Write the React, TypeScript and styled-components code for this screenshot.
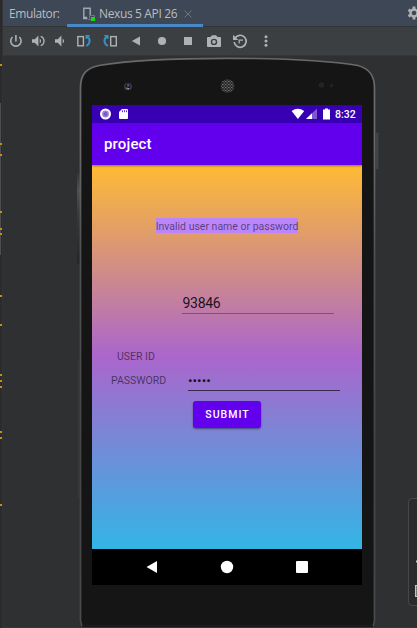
import React from "react";
import styled, { createGlobalStyle } from "styled-components";

const GlobalStyle = createGlobalStyle`
  * { box-sizing: border-box; }
  body { margin: 0; background: #2f3032; overflow: hidden; }
`;

const Window = styled.div`
  display: grid;
  grid-template-columns: 3px 414px;
  width: 417px;
  height: 628px;
  overflow: hidden;
  font-family: "Open Sans", "Noto Sans", sans-serif;
`;

const Gutter = styled.div`
  position: relative;
  background: #2b2b2b;
  border-right: 1px solid #313335;
`;

const ScrollThumb = styled.div`
  position: absolute;
  left: 0;
  top: 103px;
  width: 1px;
  height: 152px;
  background: #4d4e4f;
`;

const Mark = styled.div<{ $y: number }>`
  position: absolute;
  left: 0;
  top: ${(p) => p.$y}px;
  width: 2px;
  height: 2px;
  background: #be9117;
`;

const Panel = styled.div`
  display: flex;
  flex-direction: column;
  min-width: 0;
`;

const TabBar = styled.div`
  display: flex;
  height: 27px;
  background: #3d4755;
  border-bottom: 1px solid #323436;
  color: #bbbdbf;
  font-size: 12px;
  line-height: 28px;
  white-space: nowrap;
`;

const PanelTitle = styled.div`
  flex: none;
  width: 58px;
  margin-left: 6px;
  letter-spacing: -0.42px;
`;

const Tab = styled.div`
  display: flex;
  flex: none;
  width: 136px;
  height: 27px;
  padding-left: 14px;
  border-bottom: 3px solid #4a88c7;
  letter-spacing: -0.36px;
`;

const TabLabel = styled.span`
  width: 83px;
  margin-left: 3px;
`;

const Gear = styled.svg`
  flex: none;
  margin: 6px 0 0 204px;
`;

const Toolbar = styled.div`
  height: 29px;
  background: #3c3f41;
  border-bottom: 1px solid #343638;
`;

const Stage = styled.div`
  position: relative;
  flex: 1;
  background: #2f3032;
`;

const Case = styled.svg`
  position: absolute;
  left: 0;
  top: 0;
`;

const Screen = styled.div`
  position: relative;
  display: flex;
  flex-direction: column;
  width: 270px;
  height: 480px;
  margin: 49px 0 0 89px;
  font-family: Roboto, sans-serif;
`;

const StatusBar = styled.div`
  display: flex;
  height: 18px;
  background: #3700b3;
  color: #fff;
`;

const Clock = styled.span`
  margin-left: 5px;
  font-size: 10.5px;
  font-weight: 500;
  line-height: 19px;
`;

const AppBar = styled.div`
  position: relative;
  z-index: 1;
  height: 42px;
  padding-left: 12px;
  background: #6200ee;
  box-shadow: 0 1px 2px rgba(0, 0, 0, 0.4);
  clip-path: inset(0 0 -4px 0);
  color: #fff;
  font-size: 15px;
  font-weight: 500;
  line-height: 43px;
  letter-spacing: 0.15px;
`;

const Content = styled.div`
  display: flex;
  flex-direction: column;
  height: 384px;
  background: linear-gradient(#ffbb33, #aa66cc 50%, #33b5e5);
  color: rgba(0, 0, 0, 0.54);
  font-size: 10.5px;
`;

const Message = styled.div`
  align-self: center;
  height: 15px;
  margin-top: 53px;
  background: #bb86fc;
  line-height: 17px;
  white-space: nowrap;
`;

const Field = styled.div<{ $active?: boolean }>`
  width: 152px;
  height: 24px;
  border-bottom: 1px solid ${(p) => (p.$active ? "rgba(0,0,0,.62)" : "rgba(0,0,0,.32)")};
  color: rgba(0, 0, 0, 0.87);
  font-size: 13.5px;
  line-height: 26px;
`;

const UserField = styled(Field)`
  margin: 56px 0 0 90px;
  padding-left: 0.5px;
  height: 25px;
  font-size: 14px;
  line-height: 29px;
  letter-spacing: -0.3px;
`;

const UserLabel = styled.div`
  margin: 35px 0 0 25px;
  height: 15px;
  line-height: 15px;
`;

const PasswordRow = styled.div`
  display: flex;
  height: 24px;
  margin: 3px 0 0 19px;
`;

const PasswordLabel = styled.div`
  width: 77px;
  line-height: 27px;
`;

const Submit = styled.button`
  width: 68px;
  height: 27px;
  margin: 10px 0 0 101px;
  padding: 0 0 0 1px;
  border: 0;
  border-radius: 3px;
  background: #6200ee;
  box-shadow: 0 1px 2px rgba(0, 0, 0, 0.45);
  color: #fff;
  font: 500 10.5px/28px Roboto, sans-serif;
  letter-spacing: 1px;
`;

const NavBar = styled.div`
  height: 36px;
  background: #000;
`;

const SidePanel = styled.div`
  position: absolute;
  left: 405px;
  top: 442px;
  width: 20px;
  height: 108px;
  border: 1px solid #45484a;
  border-radius: 4px;
  background: #2b2b2b;
`;

const marks = [64, 143, 154, 211, 228, 233, 295, 324, 374, 380, 386, 431, 437, 504];

const DeviceIcon = () => (
  <svg width="15" height="27" viewBox="-1 0 15 27">
    <path d="M5.5 18.5H1.8V8.2H8.2V15" fill="none" stroke="#a2a9af" strokeWidth="1.4" />
    <path d="M1 17.7H5" stroke="#a2a9af" strokeWidth="2" />
    <path d="M7.5 18.5V15.5H12.5V18.5M6 19.5H9" fill="none" stroke="#81659a" />
    <rect x="9" y="17" width="4" height="4" fill="#0be00b" />
  </svg>
);

const ToolbarIcons = () => (
  <svg width="280" height="28" viewBox="3 27 280 28" fill="#afb1b3">
    <g fill="none" stroke="#afb1b3" strokeWidth="1.6">
      <path d="M15.9 35V41.5M12.5 37A5.2 5.2 0 1 0 19.3 37" />
      <path d="M40.7 36.3A5 5 0 0 1 40.7 45.7" strokeWidth="1.4" />
      <rect x="77.8" y="36.6" width="5.6" height="9.2" strokeWidth="1.4" />
      <rect x="110.7" y="36.6" width="5.6" height="9.2" strokeWidth="1.4" />
    </g>
    <path d="M32 39.2H34.8L38.4 35.5V46.5L34.8 42.8H32ZM39.7 38.5Q42.5 41 39.7 43.5Z" />
    <path d="M55 39.2H57.8L61.4 35.5V46.5L57.8 42.8H55ZM62.7 38.5Q65.5 41 62.7 43.5Z" />
    <g fill="none" stroke="#3592c4" strokeWidth="2">
      <path d="M86.3 46Q91.5 42.5 88.6 37.4" />
      <path d="M107.8 46Q102.6 42.5 105.5 37.4" />
    </g>
    <path d="M85.5 35H90L88 38.5L85.5 39Z" fill="#3592c4" />
    <path d="M108.5 35H104L106 38.5L108.5 39Z" fill="#3592c4" />
    <path d="M140 36.5V45.5L131.8 41Z" />
    <circle cx="162" cy="41" r="4.1" />
    <rect x="184" y="37" width="8" height="8" />
    <path fillRule="evenodd" d="M208 37H210.5L212 35.2H216L217.5 37H220Q221 37 221 38V46Q221 47 220 47H208Q207 47 207 46V38Q207 37 208 37ZM214 38.7A3.2 3.2 0 1 0 214 45.1A3.2 3.2 0 1 0 214 38.7Z" />
    <circle cx="214" cy="41.9" r="1.8" />
    <path d="M235 38.2A6 6 0 1 1 234.2 42" fill="none" stroke="#afb1b3" strokeWidth="1.7" />
    <path d="M233 34.8V40H238.3Z" />
    <path d="M239.2 43.5V40.2H243" fill="none" stroke="#afb1b3" strokeWidth="1.3" />
    <circle cx="266" cy="36.7" r="1.5" />
    <circle cx="266" cy="41" r="1.5" />
    <circle cx="266" cy="45.3" r="1.5" />
  </svg>
);

const PhoneCase = () => (
  <Case width="414" height="572" viewBox="3 56 414 572">
    <defs>
      <linearGradient id="edge" x1="0" y1="57" x2="0" y2="626" gradientUnits="userSpaceOnUse">
        <stop offset="0" stopColor="#686868" />
        <stop offset=".14" stopColor="#6b6b6b" />
        <stop offset=".35" stopColor="#505152" />
        <stop offset=".7" stopColor="#444648" />
        <stop offset="1" stopColor="#4a4b4b" />
      </linearGradient>
      <linearGradient id="rocker" x1="0" y1="172" x2="0" y2="264" gradientUnits="userSpaceOnUse">
        <stop offset="0" stopColor="#333" />
        <stop offset=".2" stopColor="#505152" />
        <stop offset=".45" stopColor="#38393a" />
        <stop offset="1" stopColor="#252627" />
      </linearGradient>
      <pattern id="mesh" width="3" height="3" patternUnits="userSpaceOnUse">
        <rect width="3" height="3" fill="#242424" />
        <path d="M0 .5H1.5M1.5 2H3" stroke="#707070" />
      </pattern>
    </defs>
    <rect x="77" y="173" width="3" height="91" fill="url(#rocker)" />
    <rect x="376" y="132.5" width="2.5" height="37" rx="1" fill="#414345" />
    <path d="M78.5 360V498" stroke="#37393a" />
    <path
      d="M82 626L80.5 621V88C80.5 74 86 68.5 99 65.5C133 59.5 180 58.3 227.5 58.3S321 59.5 358 65.5C369 68.5 374.5 75 374.5 88V621L373 626Z"
      fill="#151515"
      stroke="url(#edge)"
      strokeWidth="1.7"
    />
    <path d="M82 626.2H373" stroke="#151515" strokeWidth="1.8" />
    <path d="M3 627.5H417" stroke="#353637" />
    <circle cx="128" cy="86.5" r="3.8" fill="#484848" />
    <circle cx="128" cy="86" r="2.7" fill="#17172b" />
    <circle cx="128.2" cy="85.3" r="1.2" fill="#525297" />
    <path d="M126.5 88L129 88.7" stroke="#aaa" />
    <circle cx="227.5" cy="86" r="6.8" fill="url(#mesh)" />
    <circle cx="321.5" cy="85" r="2.8" fill="#242424" />
    <circle cx="331.5" cy="85.5" r="1.7" fill="#242424" />
  </Case>
);

const StatusIcons = () => (
  <svg width="238" height="18" viewBox="92 105 238 18" fill="#fff">
    <circle cx="105.5" cy="114" r="5.5" />
    <circle cx="105.5" cy="114" r="3.4" fill="#9a80d9" />
    <circle cx="105.5" cy="114" r="1.9" fill="#7957c8" />
    <path d="M119 112L122 109H127Q128 109 128 110V118Q128 119 127 119H120Q119 119 119 118Z" />
    <path d="M122.5 110.3V112.2M124.5 110.3V112.2M126.5 110.3V112.2" stroke="#3700b3" strokeWidth=".8" />
    <path d="M291.6 111Q297.8 106.7 304.2 111L297.9 119Z" />
    <path d="M306 119L317 108.5V119Z" opacity=".35" />
    <path d="M306 119L312 113.3V119Z" />
    <path d="M323 109.5H325V108.5H328V109.5H330V119.5H323Z" />
  </svg>
);

export default function App() {
  return (
    <>
      <GlobalStyle />
      <Window>
        <Gutter>
          <ScrollThumb />
          {marks.map((y) => (
            <Mark key={y} $y={y} />
          ))}
        </Gutter>
        <Panel>
          <TabBar>
            <PanelTitle>Emulator:</PanelTitle>
            <Tab>
              <DeviceIcon />
              <TabLabel>Nexus 5 API 26</TabLabel>
              <svg width="12" height="27" viewBox="0 0 12 27">
                <path d="M2.5 10.5L9.5 17.5M9.5 10.5L2.5 17.5" stroke="#6a747c" />
              </svg>
            </Tab>
            <Gear width="14" height="14" viewBox="0 0 14 14">
              <circle cx="7" cy="7" r="3.5" fill="none" stroke="#afb1b3" strokeWidth="2.4" />
              <path
                d="M7 .6V3M7 11V13.4M1.5 3.8L3.6 5M10.4 9L12.5 10.2M1.5 10.2L3.6 9M10.4 5L12.5 3.8"
                stroke="#afb1b3"
                strokeWidth="2.8"
              />
            </Gear>
          </TabBar>
          <Toolbar>
            <ToolbarIcons />
          </Toolbar>
          <Stage>
            <PhoneCase />
            <SidePanel>
              <svg width="9" height="106" viewBox="409 499 9 106">
                <path d="M416 561.5H418" stroke="#c4c4c4" strokeWidth="2" />
                <rect x="415.5" y="585.5" width="6" height="11" fill="#777" stroke="#c4c4c4" />
              </svg>
            </SidePanel>
            <Screen>
              <StatusBar>
                <StatusIcons />
                <Clock>8:32</Clock>
              </StatusBar>
              <AppBar>project</AppBar>
              <Content>
                <Message>Invalid user name or password</Message>
                <UserField>93846</UserField>
                <UserLabel>USER ID</UserLabel>
                <PasswordRow>
                  <PasswordLabel>PASSWORD</PasswordLabel>
                  <Field $active>•••••</Field>
                </PasswordRow>
                <Submit>SUBMIT</Submit>
              </Content>
              <NavBar>
                <svg width="270" height="36" viewBox="92 549 270 36" fill="#fff">
                  <path d="M157 561V573L146.5 567Z" />
                  <circle cx="227" cy="567" r="6.2" />
                  <rect x="296" y="561" width="12" height="12" rx="1" />
                </svg>
              </NavBar>
            </Screen>
          </Stage>
        </Panel>
      </Window>
    </>
  );
}
